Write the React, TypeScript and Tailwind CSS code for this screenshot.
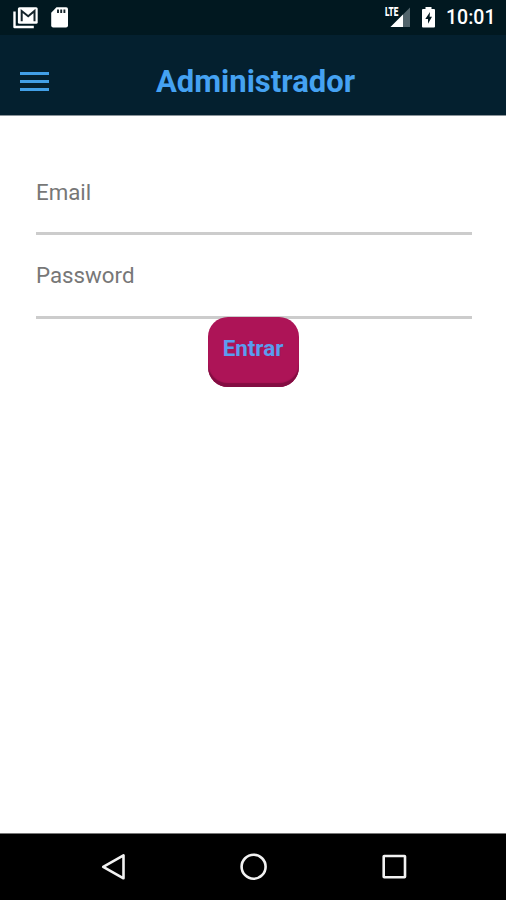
function StatusBar() {
  return (
    <div className="flex h-[35px] items-start justify-between bg-[#011820] text-white">
      <div className="flex">
        <svg width="80" height="35" viewBox="0 0 80 35" fill="none">
          <path d="M14.5 11.5V27H33.8" stroke="white" strokeWidth="2.4" strokeLinejoin="round" />
          <rect x="17.9" y="7.2" width="19.8" height="16.6" rx="1.6" fill="white" />
          <path d="M21.7 21.3V11L28.2 16.3L34.5 11V21.3" stroke="#15242b" strokeWidth="2" />
          <path d="M56.5 7.3H66.2Q68 7.3 68 9.2V25.5Q68 27.5 66 27.5H53.2Q51.2 27.5 51.2 25.5V12.7Z" fill="white" />
          <path d="M58 9.5V13M61.2 9.5V13M64.4 9.5V13" stroke="#15242b" strokeWidth="1.9" />
        </svg>
      </div>
      <div className="flex">
        <svg width="62" height="35" viewBox="384 0 62 35">
          <path d="M410 7.5V27H390.5Z" fill="#52646b" />
          <path d="M403 14.5V27H390.5Z" fill="white" />
          <text x="385" y="16.4" fontSize="13" fontWeight="900" textLength="13.3" lengthAdjust="spacingAndGlyphs" fill="white" stroke="#011820" strokeWidth="1.5" paintOrder="stroke" fontFamily="Roboto, sans-serif">LTE</text>
          <path d="M425.5 7H431.5V9H434Q435 9 435 10V26.5Q435 27.5 434 27.5H423Q422 27.5 422 26.5V10Q422 9 423 9H425.5Z" fill="white" />
          <path d="M430 12L425.3 19H428V23.7L432 16.7H429.6Z" fill="#011820" />
        </svg>
        <span className="w-[60px] pt-[6px] text-[19.5px] leading-6 font-medium">10:01</span>
      </div>
    </div>
  );
}

function Header() {
  return (
    <header className="relative flex h-[81px] items-center justify-center border-b border-[#8b949a] bg-[#04202f]">
      <button aria-label="Menu" className="absolute top-[37px] left-5 flex flex-col gap-[5px]">
        <span className="h-[3px] w-[29px] bg-[#429fe6]" />
        <span className="h-[3px] w-[29px] bg-[#429fe6]" />
        <span className="h-[3px] w-[29px] bg-[#429fe6]" />
      </button>
      <h1 className="mt-[13px] ml-[5px] text-[31px] leading-9 font-bold text-[#45a2f2]">Administrador</h1>
    </header>
  );
}

export default function App() {
  return (
    <div className="flex h-[900px] w-[506px] flex-col bg-white font-['Roboto',sans-serif]">
      <StatusBar />
      <Header />
      <main className="flex flex-1 flex-col pt-[52px] pr-[34px] pl-9">
        <div className="h-[67px] border-b-[3px] border-[#cccccc] pt-[11px] text-[22.3px] leading-[26px] text-[#777777]">Email</div>
        <div className="h-[84px] border-b-[3px] border-[#cccccc] pt-[27px] text-[22.3px] leading-[26px] text-[#777777]">Password</div>
        <button className="-mt-[2px] mr-[2px] flex h-[70px] w-[91px] justify-center self-center rounded-[20px] bg-[#ad1457] pt-[18px] text-[22.4px] leading-[26px] font-bold text-[#5a9df0] shadow-[inset_0_-4px_1px_#830d42]">Entrar</button>
      </main>
      <nav className="flex h-[67px] justify-center border-t border-[#777777] bg-black">
        <svg width="506" height="66" viewBox="0 834 506 66" fill="none" stroke="#f2f2f2" strokeWidth="2.6">
          <path d="M123.5 855.3V878.3L103.2 866.8Z" strokeLinejoin="round" />
          <circle cx="253.6" cy="866.7" r="12" />
          <rect x="383.7" y="856" width="21.3" height="21.3" rx="0.5" />
        </svg>
      </nav>
    </div>
  );
}
